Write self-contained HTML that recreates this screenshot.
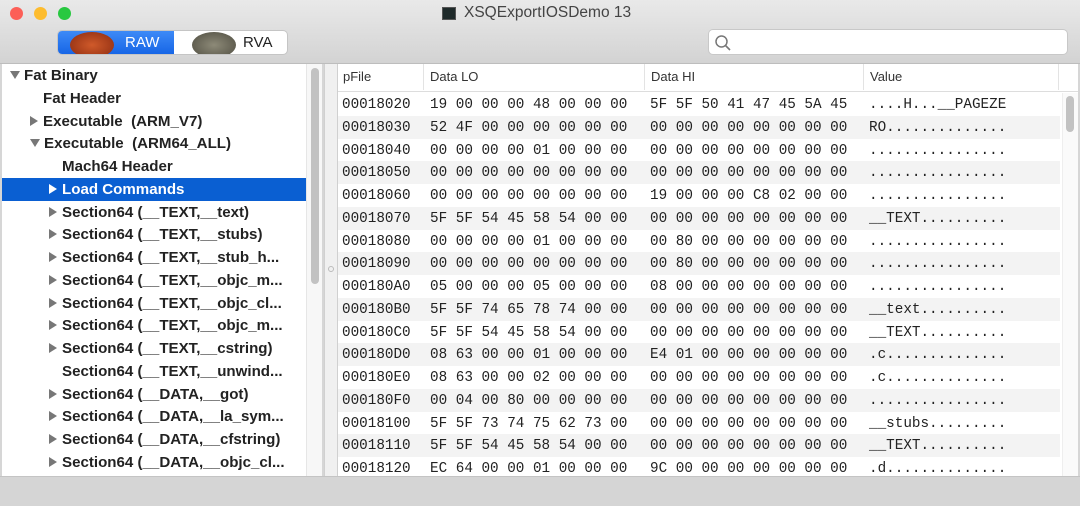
<!DOCTYPE html><html><head><style>
*{margin:0;padding:0;box-sizing:border-box}
body{width:1080px;height:506px;overflow:hidden;background:#d6d6d6;font-family:"Liberation Sans",sans-serif;position:relative}
.a{position:absolute}
.title{left:0;top:0;width:1080px;height:64px;background:linear-gradient(#e9e9e9,#d3d3d3);border-bottom:1px solid #bdbdbd}
.dot{width:13px;height:13px;border-radius:50%;top:7px}
.tree{left:2px;top:64px;width:320px;height:412px;background:#fff;overflow:hidden}
.tr{position:absolute;height:22.75px;line-height:24px;font-weight:bold;font-size:15.1px;color:#222;white-space:nowrap;width:304px}
.tri{display:inline-block;width:0;height:0;border-top:5px solid transparent;border-bottom:5px solid transparent;border-left:8px solid #777;margin-right:5px;vertical-align:0px}
.trd{display:inline-block;width:0;height:0;border-left:5px solid transparent;border-right:5px solid transparent;border-top:8px solid #777;margin-right:4px;vertical-align:1px}
.grid{left:338px;top:64px;width:740px;height:412px;background:#fff;overflow:hidden}
.hd{position:absolute;left:0;top:0;width:740px;height:28px;border-bottom:1px solid #ddd;font-size:13px;color:#333;line-height:26px}
.hd span{position:absolute;top:0;height:26px;border-left:1px solid #e3e3e3;padding-left:6px}
.row{position:absolute;left:0;width:722px;height:22.75px;line-height:25px;font-family:"Liberation Mono",monospace;font-size:14.3px;color:#222;white-space:pre}
.row span{position:absolute;top:0}
.g{background:#f3f3f3}
</style></head><body>
<div class="a title"></div>
<div class="a dot" style="left:10px;background:#fc5f57"></div>
<div class="a dot" style="left:34px;background:#fdbc2e"></div>
<div class="a dot" style="left:58px;background:#28c840"></div>
<div class="a" style="left:442px;top:7px;width:14px;height:13px;background:#1f2a2a;border:1px solid #555"></div>
<div class="a" style="left:464px;top:4px;font-size:15.5px;color:#444">XSQExportIOSDemo 13</div>
<div class="a" style="left:58px;top:31px;width:229px;height:23px;border-radius:4px;background:#fff;box-shadow:0 0 0 1px #c5c5c5;overflow:hidden">
<div class="a" style="left:0;top:0;width:116px;height:23px;background:linear-gradient(#3d8af7,#1766e6)"></div>
<div class="a" style="left:12px;top:1px;width:44px;height:26px;border-radius:50%;background:radial-gradient(#d05a2a,#8a2a10)"></div>
<div class="a" style="left:134px;top:1px;width:44px;height:26px;border-radius:50%;background:radial-gradient(#8d8a78,#4e4c40)"></div>
<div class="a" style="left:67px;top:3px;color:#fff;font-size:15px">RAW</div>
<div class="a" style="left:185px;top:3px;color:#222;font-size:15px">RVA</div>
</div>
<div class="a" style="left:709px;top:30px;width:358px;height:24px;background:#fff;border-radius:4px;box-shadow:0 0 0 1px #c8c8c8"></div>
<svg class="a" style="left:714px;top:34px" width="18" height="18"><circle cx="7.5" cy="7.5" r="5.5" fill="none" stroke="#777" stroke-width="1.5"/><line x1="11.5" y1="11.5" x2="16" y2="16" stroke="#777" stroke-width="1.6"/></svg>
<div class="a tree">
<div class="tr" style="left:8px;top:0"><i class="trd"></i>Fat Binary</div>
<div class="tr" style="left:41px;top:22.75px">Fat Header</div>
<div class="tr" style="left:28px;top:45.5px"><i class="tri"></i>Executable&nbsp; (ARM_V7)</div>
<div class="tr" style="left:28px;top:68.25px"><i class="trd"></i>Executable&nbsp; (ARM64_ALL)</div>
<div class="tr" style="left:60px;top:91px">Mach64 Header</div>
<div class="tr" style="left:0;top:113.75px;background:#0a5fd2;color:#fff;padding-left:47px"><i class="tri" style="border-left-color:#fff"></i>Load Commands</div>
<div class="tr" style="left:47px;top:136.5px"><i class="tri"></i>Section64 (__TEXT,__text)</div>
<div class="tr" style="left:47px;top:159.25px"><i class="tri"></i>Section64 (__TEXT,__stubs)</div>
<div class="tr" style="left:47px;top:182px"><i class="tri"></i>Section64 (__TEXT,__stub_h...</div>
<div class="tr" style="left:47px;top:204.75px"><i class="tri"></i>Section64 (__TEXT,__objc_m...</div>
<div class="tr" style="left:47px;top:227.5px"><i class="tri"></i>Section64 (__TEXT,__objc_cl...</div>
<div class="tr" style="left:47px;top:250.25px"><i class="tri"></i>Section64 (__TEXT,__objc_m...</div>
<div class="tr" style="left:47px;top:273px"><i class="tri"></i>Section64 (__TEXT,__cstring)</div>
<div class="tr" style="left:60px;top:295.75px">Section64 (__TEXT,__unwind...</div>
<div class="tr" style="left:47px;top:318.5px"><i class="tri"></i>Section64 (__DATA,__got)</div>
<div class="tr" style="left:47px;top:341.25px"><i class="tri"></i>Section64 (__DATA,__la_sym...</div>
<div class="tr" style="left:47px;top:364px"><i class="tri"></i>Section64 (__DATA,__cfstring)</div>
<div class="tr" style="left:47px;top:386.75px"><i class="tri"></i>Section64 (__DATA,__objc_cl...</div>
<div class="a" style="left:304px;top:0;width:16px;height:412px;background:#f7f7f7;border-left:1px solid #e6e6e6"></div>
<div class="a" style="left:309px;top:4px;width:8px;height:216px;border-radius:4px;background:#c2c2c2"></div>
</div>
<div class="a" style="left:324px;top:64px;width:14px;height:412px;background:#f0f0f0;border-left:1px solid #d0d0d0;border-right:1px solid #d0d0d0"></div>
<div class="a" style="left:328px;top:266px;width:6px;height:6px;border-radius:50%;border:1px solid #bbb"></div>
<div class="a grid">
<div class="hd"><span style="left:0;border:0;padding-left:5px">pFile</span><span style="left:85px">Data LO</span><span style="left:306px">Data HI</span><span style="left:525px">Value</span><span style="left:720px"></span></div>
<div class="a" style="left:724px;top:29px;width:16px;height:383px;background:#fafafa;border-left:1px solid #eee"></div>
<div class="a" style="left:728px;top:32px;width:8px;height:36px;border-radius:4px;background:#c2c2c2"></div>
</div>
<div class="a" style="left:338px;top:64px;width:740px;height:412px;pointer-events:none;overflow:hidden">
<div style="position:relative">
<div class="row" style="top:29px"><span style="left:4px">00018020</span><span style="left:92px">19 00 00 00 48 00 00 00</span><span style="left:312px">5F 5F 50 41 47 45 5A 45</span><span style="left:531px">....H...__PAGEZE</span></div>
<div class="row g" style="top:51.75px"><span style="left:4px">00018030</span><span style="left:92px">52 4F 00 00 00 00 00 00</span><span style="left:312px">00 00 00 00 00 00 00 00</span><span style="left:531px">RO..............</span></div>
<div class="row" style="top:74.5px"><span style="left:4px">00018040</span><span style="left:92px">00 00 00 00 01 00 00 00</span><span style="left:312px">00 00 00 00 00 00 00 00</span><span style="left:531px">................</span></div>
<div class="row g" style="top:97.25px"><span style="left:4px">00018050</span><span style="left:92px">00 00 00 00 00 00 00 00</span><span style="left:312px">00 00 00 00 00 00 00 00</span><span style="left:531px">................</span></div>
<div class="row" style="top:120px"><span style="left:4px">00018060</span><span style="left:92px">00 00 00 00 00 00 00 00</span><span style="left:312px">19 00 00 00 C8 02 00 00</span><span style="left:531px">................</span></div>
<div class="row g" style="top:142.75px"><span style="left:4px">00018070</span><span style="left:92px">5F 5F 54 45 58 54 00 00</span><span style="left:312px">00 00 00 00 00 00 00 00</span><span style="left:531px">__TEXT..........</span></div>
<div class="row" style="top:165.5px"><span style="left:4px">00018080</span><span style="left:92px">00 00 00 00 01 00 00 00</span><span style="left:312px">00 80 00 00 00 00 00 00</span><span style="left:531px">................</span></div>
<div class="row g" style="top:188.25px"><span style="left:4px">00018090</span><span style="left:92px">00 00 00 00 00 00 00 00</span><span style="left:312px">00 80 00 00 00 00 00 00</span><span style="left:531px">................</span></div>
<div class="row" style="top:211px"><span style="left:4px">000180A0</span><span style="left:92px">05 00 00 00 05 00 00 00</span><span style="left:312px">08 00 00 00 00 00 00 00</span><span style="left:531px">................</span></div>
<div class="row g" style="top:233.75px"><span style="left:4px">000180B0</span><span style="left:92px">5F 5F 74 65 78 74 00 00</span><span style="left:312px">00 00 00 00 00 00 00 00</span><span style="left:531px">__text..........</span></div>
<div class="row" style="top:256.5px"><span style="left:4px">000180C0</span><span style="left:92px">5F 5F 54 45 58 54 00 00</span><span style="left:312px">00 00 00 00 00 00 00 00</span><span style="left:531px">__TEXT..........</span></div>
<div class="row g" style="top:279.25px"><span style="left:4px">000180D0</span><span style="left:92px">08 63 00 00 01 00 00 00</span><span style="left:312px">E4 01 00 00 00 00 00 00</span><span style="left:531px">.c..............</span></div>
<div class="row" style="top:302px"><span style="left:4px">000180E0</span><span style="left:92px">08 63 00 00 02 00 00 00</span><span style="left:312px">00 00 00 00 00 00 00 00</span><span style="left:531px">.c..............</span></div>
<div class="row g" style="top:324.75px"><span style="left:4px">000180F0</span><span style="left:92px">00 04 00 80 00 00 00 00</span><span style="left:312px">00 00 00 00 00 00 00 00</span><span style="left:531px">................</span></div>
<div class="row" style="top:347.5px"><span style="left:4px">00018100</span><span style="left:92px">5F 5F 73 74 75 62 73 00</span><span style="left:312px">00 00 00 00 00 00 00 00</span><span style="left:531px">__stubs.........</span></div>
<div class="row g" style="top:370.25px"><span style="left:4px">00018110</span><span style="left:92px">5F 5F 54 45 58 54 00 00</span><span style="left:312px">00 00 00 00 00 00 00 00</span><span style="left:531px">__TEXT..........</span></div>
<div class="row" style="top:393px"><span style="left:4px">00018120</span><span style="left:92px">EC 64 00 00 01 00 00 00</span><span style="left:312px">9C 00 00 00 00 00 00 00</span><span style="left:531px">.d..............</span></div>
</div></div>
<div class="a" style="left:0;top:476px;width:1080px;height:30px;background:#d5d5d5;border-top:1px solid #c4c4c4"></div>
</body></html>
